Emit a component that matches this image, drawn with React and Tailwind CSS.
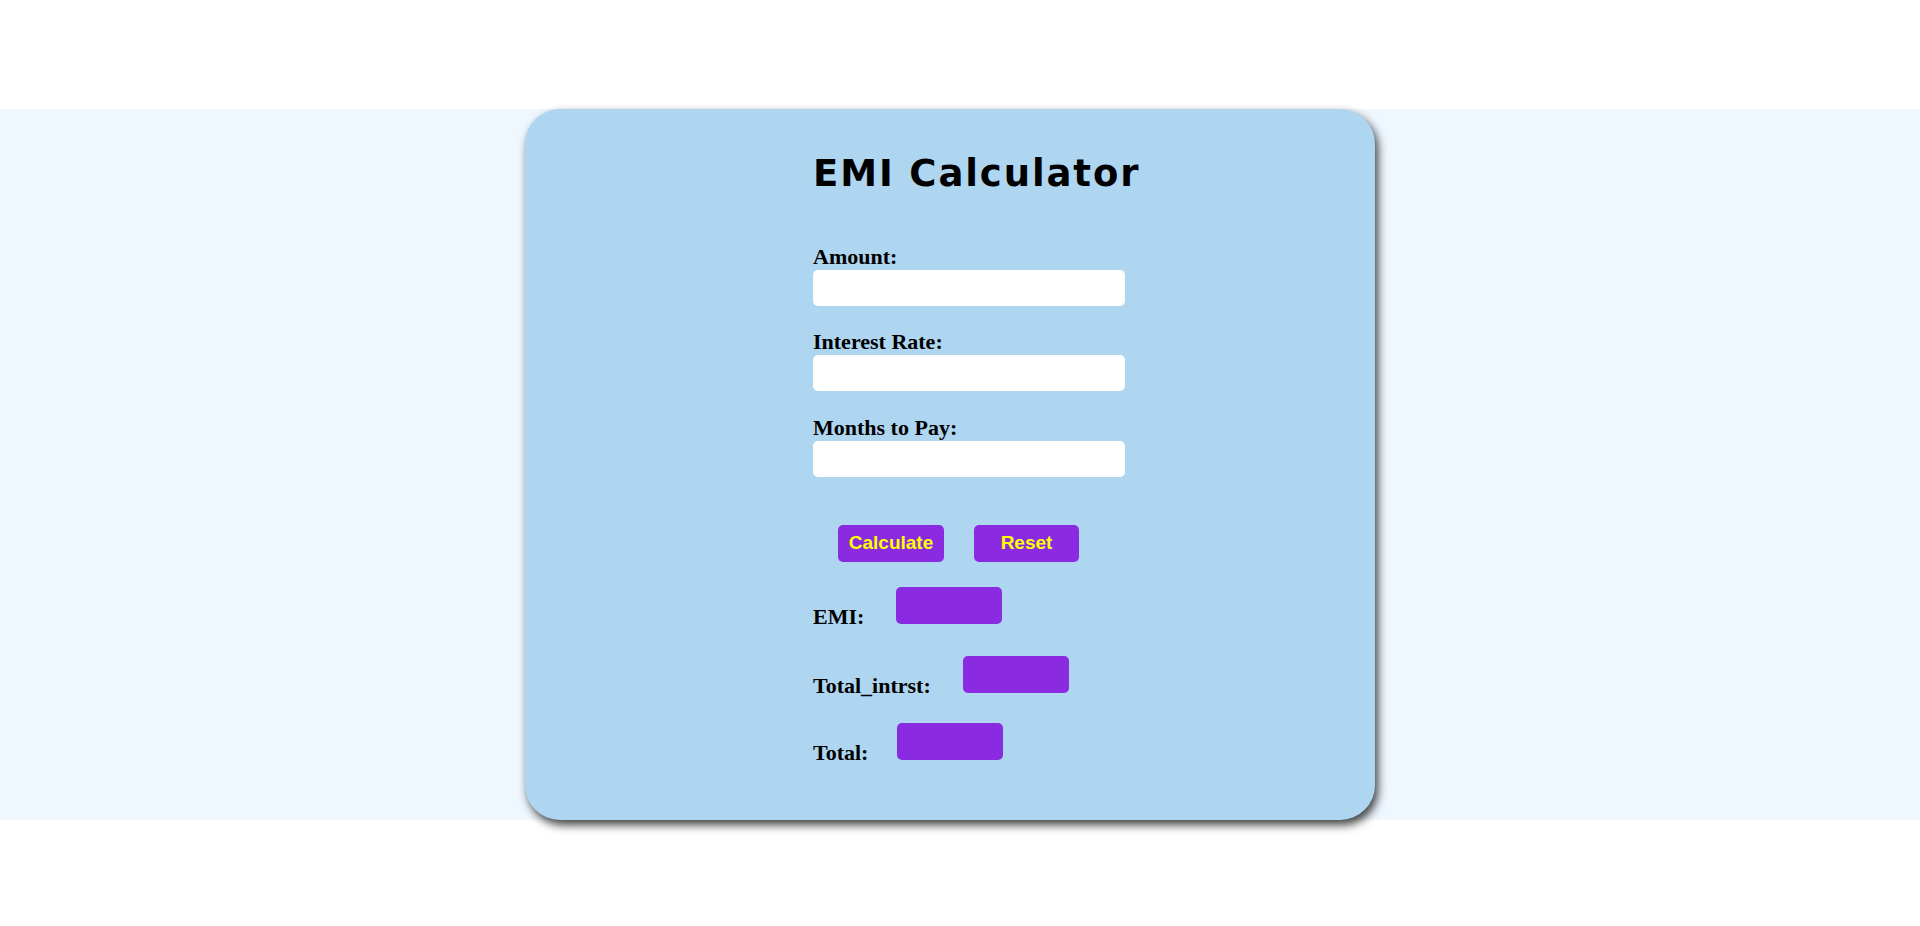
export default function App() {
  const labelCls = "block text-[22px] leading-[25px] font-bold text-black";
  const inputCls = "block mt-[1px] w-[312px] h-[36px] rounded-[5px] border-0 bg-white outline-none";
  const boxCls = "inline-block align-baseline w-[106px] h-[37px] rounded-[5px] bg-[#8A2BE2]";
  return (
    <div className="min-h-[926px] bg-white pt-[109px] font-['Liberation_Serif',serif]">
      <div className="bg-[#F0F8FF]">
        <div className="ml-[525px] w-[850px] h-[711px] rounded-[35px] bg-[#AED6F1] shadow-[3px_5px_10px_rgba(0,0,0,0.75)] pl-[288px] pt-[43px]">
          <h1 className="m-0 text-[37px] leading-[43px] font-bold tracking-[1.9px] text-black font-['DejaVu_Sans',Verdana,sans-serif]">
            EMI Calculator
          </h1>

          <div className="mt-[49px]">
            <label className={labelCls}>Amount:</label>
            <input type="text" className={inputCls} />
          </div>
          <div className="mt-[23px]">
            <label className={labelCls}>Interest Rate:</label>
            <input type="text" className={inputCls} />
          </div>
          <div className="mt-[24px]">
            <label className={labelCls}>Months to Pay:</label>
            <input type="text" className={inputCls} />
          </div>

          <div className="mt-[48px] flex gap-[30px] pl-[25px]">
            <button className="w-[106px] h-[37px] rounded-[5px] bg-[#8A2BE2] text-[#FFFF00] font-bold text-[19px] font-['Liberation_Sans',Arial,sans-serif] flex items-center justify-center">
              Calculate
            </button>
            <button className="w-[105px] h-[37px] rounded-[5px] bg-[#8A2BE2] text-[#FFFF00] font-bold text-[19px] font-['Liberation_Sans',Arial,sans-serif] flex items-center justify-center">
              Reset
            </button>
          </div>

          <div className="mt-[25px] text-[22px] leading-[25px] font-bold text-black">
            <div>
              EMI:<span className={boxCls + " ml-[32px]"}></span>
            </div>
            <div className="mt-[27px]">
              Total_intrst:<span className={boxCls + " ml-[32px]"}></span>
            </div>
            <div className="mt-[25px]">
              Total:<span className={boxCls + " ml-[29px]"}></span>
            </div>
          </div>
        </div>
      </div>
    </div>
  );
}
